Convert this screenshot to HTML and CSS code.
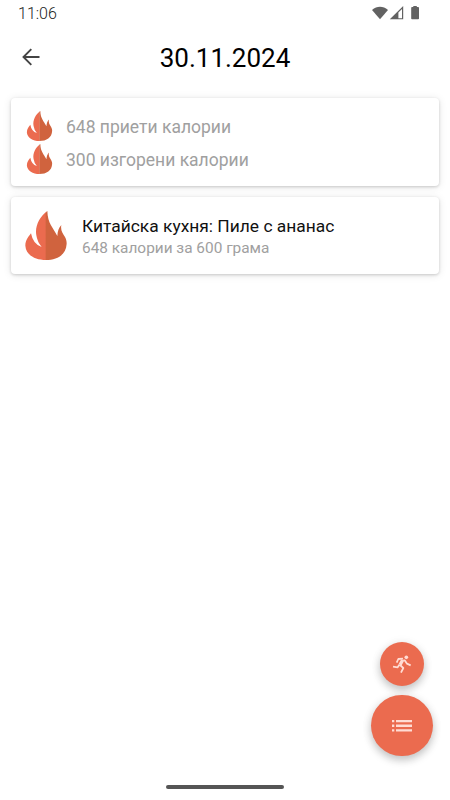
FILE: index.html
```html
<!DOCTYPE html>
<html lang="bg">
<head>
<meta charset="utf-8">
<title>30.11.2024</title>
<link rel="stylesheet" href="styles.css">
</head>
<body>
<svg class="defs" aria-hidden="true">
  <symbol id="flame" viewBox="0 0 124 147">
    <path class="flame-light" d="M66 0C42 17 28 47 33 73Q36 93 49 108Q23 100 17 67C10 76 0 87 0 104C2 132 29 147 62 147V5Z"/>
    <path class="flame-dark" d="M66 0C67 38 83 49 96 75C97 60 100 51 108 42C105 59 112 67 119 78C123 86 124 91 124 98C122 131 97 147 61 147V5Z"/>
  </symbol>
</svg>
<div class="screen">
  <div class="status">
    <span class="time">11:06</span>
    <svg class="signals" viewBox="0 0 50 16" aria-hidden="true">
      <path d="M0 4C5-.2 11-.2 16 4L8 13.2Z"/>
      <path fill-rule="evenodd" d="M31.2 0V13.2H17.8ZM30 3L26.4 6.5V12.2H30Z"/>
      <path d="M41.3 0H44.8V1.1H46.2Q47 1.1 47 2V12.4Q47 13.2 46.2 13.2H40Q39.2 13.2 39.2 12.4V2Q39.2 1.1 40 1.1H41.3Z"/>
    </svg>
  </div>
  <header class="bar">
    <svg class="back" viewBox="0 0 18 18" aria-hidden="true"><path d="M17.5 9H1.5M9.3 1.2L1.5 9L9.3 16.8"/></svg>
    <h1>30.11.2024</h1>
  </header>
  <main>
    <section class="card summary">
      <div class="row"><svg class="small-flame"><use href="#flame"/></svg><span>648 приети калории</span></div>
      <div class="row"><svg class="small-flame"><use href="#flame"/></svg><span>300 изгорени калории</span></div>
    </section>
    <section class="card meal">
      <svg class="large-flame"><use href="#flame"/></svg>
      <div class="info">
        <h2>Китайска кухня: Пиле с ананас</h2>
        <p>648 калории за 600 грама</p>
      </div>
    </section>
  </main>
  <div class="actions">
    <button class="fab run" aria-label="Тренировка"><svg viewBox="97 73 60 60"><circle cx="140" cy="83" r="5.5"/><path class="torso" d="M129 91L121 106"/><path class="limbs" d="M131 91L136 93L142 102L153 107M130 87L116 88L111 99M121 106L131 115L124 129M119 105L114 113L100 111"/></svg></button>
    <button class="fab list" aria-label="Списък"><svg viewBox="0 0 20 12"><path d="M0 0H2.3V2.3H0ZM4 0H20V2.3H4ZM0 4.6H2.3V6.9H0ZM4 4.6H20V6.9H4ZM0 9.2H2.3V11.5H0ZM4 9.2H20V11.5H4Z"/></svg></button>
  </div>
  <div class="home"></div>
</div>
</body>
</html>
```

FILE: styles.css
```css
* { box-sizing: border-box; }
body { margin: 0; background: #fff; font-family: Roboto, "Liberation Sans", sans-serif; }
h1, h2, p { margin: 0; font-weight: 400; }
svg { display: block; flex-shrink: 0; }
.defs { position: absolute; width: 0; height: 0; }
.flame-light { fill: #eb6b4f; }
.flame-dark { fill: #d0633e; }
.screen { height: 800px; display: flex; flex-direction: column; overflow: hidden; }
.status { height: 28px; padding: 4px 29px 0 18px; display: flex; justify-content: space-between; align-items: flex-start; }
.time { font-size: 16px; line-height: 19px; font-weight: 300; color: #222; }
.signals { width: 50px; height: 16px; margin: 2px -.5px 0 0; fill: #626262; }
.bar { height: 60px; display: grid; grid-template-columns: 80px 1fr 80px; align-items: center; }
.back { width: 18px; height: 18px; margin-left: 22px; margin-top: -2px; fill: none; stroke: #444; stroke-width: 1.9; }
h1 { font-size: 26px; line-height: 34px; text-align: center; color: #000; }
main { padding: 10px 11px 0; display: flex; flex-direction: column; gap: 11px; flex: 1; }
.card { background: #fff; border-radius: 4px; box-shadow: 0 1px 3px rgba(0,0,0,.17), 0 1px 8px rgba(0,0,0,.1); }
.summary { height: 88px; padding: 12px 15px; }
.row { height: 33px; display: flex; align-items: center; gap: 13px; color: #a0a0a0; font-size: 17.5px; line-height: 32px; }
.small-flame { width: 27px; height: 30px; margin-bottom: 2px; }
.meal { height: 77px; display: flex; align-items: center; padding: 0 14px; gap: 15px; }
.large-flame { width: 42px; height: 49px; }
h2 { font-size: 17.4px; line-height: 24px; color: #111; }
.info p { font-size: 15.4px; line-height: 20px; color: #a0a0a0; }
.actions { align-self: flex-end; margin-right: 17.4px; display: flex; flex-direction: column; align-items: center; gap: 8.7px; }
.fab { border: 0; padding: 0; border-radius: 50%; background: #eb6b4f; display: grid; place-items: center; box-shadow: 0 4px 9px rgba(0,0,0,.22), 0 1px 12px rgba(0,0,0,.06); }
.fab svg { fill: #ffdcd4; }
.run { width: 44px; height: 44px; }
.run svg { width: 20px; height: 20px; }
.torso, .limbs { fill: none; stroke: #ffdcd4; stroke-linejoin: round; }
.torso { stroke-width: 10; }
.limbs { stroke-width: 5.3; }
.list { width: 61.3px; height: 61.3px; }
.list svg { width: 20px; height: 12px; }
.home { width: 118px; height: 4px; border-radius: 2px; margin: 28.7px auto 11px; background: #555; }
```
